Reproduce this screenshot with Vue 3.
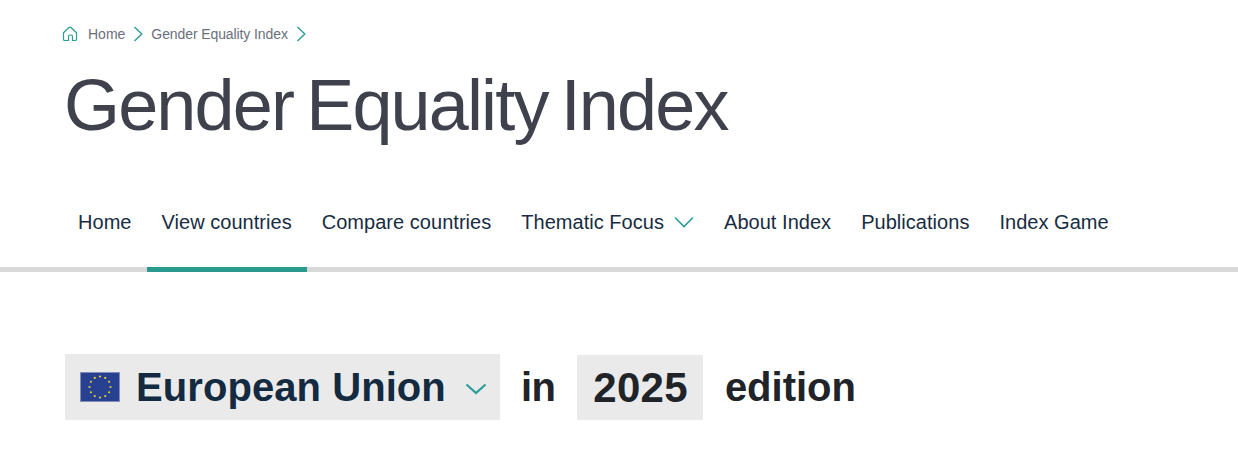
<script setup>
const tabs = [
  { label: 'Home' },
  { label: 'View countries', active: true },
  { label: 'Compare countries' },
  { label: 'Thematic Focus', caret: true },
  { label: 'About Index' },
  { label: 'Publications' },
  { label: 'Index Game' }
]
const stars = Array.from({ length: 12 }, (_, i) => {
  const a = (i * Math.PI) / 6
  return { x: 20 + 10.500 * Math.sin(a), y: 15 - 10.500 * Math.cos(a) }
})
</script>

<template>
  <div class="page">
    <nav class="crumbs">
      <svg class="home" width="16" height="16" viewBox="0 0 16 16" fill="none">
        <path d="M1.500 6.800 7 1.500q1-.8 2 0l5.500 5.300v6.400q0 1.300-1.300 1.300h-2.700V10.500q0-1.500-1.500-1.500h-1q-1.500 0-1.500 1.500v4H2.800q-1.300 0-1.300-1.300z" stroke="#2b9c96" stroke-width="1.200" stroke-linejoin="round" />
      </svg>
      <span class="crumb first">Home</span>
      <svg class="chev" width="10" height="16" viewBox="0 0 10 16" fill="none"><path d="M1.500 1 8.800 8l-7.300 7" stroke="#2b9c96" stroke-width="1.400" /></svg>
      <span class="crumb second">Gender Equality Index</span>
      <svg class="chev" width="10" height="16" viewBox="0 0 10 16" fill="none"><path d="M1.500 1 8.800 8l-7.300 7" stroke="#2b9c96" stroke-width="1.400" /></svg>
    </nav>

    <h1 class="title">Gender Equality Index</h1>

    <div class="tabs">
      <a v-for="t in tabs" :key="t.label" class="tab" :class="{ active: t.active }">
        {{ t.label }}
        <svg v-if="t.caret" class="caret" width="20" height="12" viewBox="0 0 20 12" fill="none"><path d="M1 1.500 10 10.500l9-9" stroke="#2b9c96" stroke-width="1.600" /></svg>
      </a>
    </div>

    <div class="heading">
      <div class="pick country">
        <svg class="flag" width="40" height="30" viewBox="0 0 40 30">
          <rect x="0.500" y="0.500" width="39" height="29" fill="#27408f" stroke="#7f8fb8" />
          <circle v-for="(s, i) in stars" :key="i" :cx="s.x" :cy="s.y" r="1.100" fill="#dcd03a" />
        </svg>
        <span class="name">European Union</span>
        <svg class="down" width="22" height="12" viewBox="0 0 22 12" fill="none"><path d="M1.500 1.500 11 10l9.500-8.500" stroke="#2b9c96" stroke-width="2.200" /></svg>
      </div>
      <span class="word in">in</span>
      <div class="pick year">2025</div>
      <span class="word edition">edition</span>
    </div>
  </div>
</template>

<style>
html, body { background: #fff; }
</style>

<style scoped>
.page {
  width: 1238px;
  height: 460px;
  overflow: hidden;
  font-family: "Liberation Sans", Arial, sans-serif;
  display: flex;
  flex-direction: column;
}
.crumbs {
  display: flex;
  align-items: center;
  height: 20px;
  margin: 24px 0 0 62px;
  font-size: 14px;
  color: #6b6f7b;
}
.home { margin-right: 10px; }
.crumb { white-space: nowrap; }
.second { letter-spacing: -0.1px; }
.chev { margin: 0 8px; }
.title {
  margin: 21px 0 0 64px;
  font-weight: 400;
  font-size: 72px;
  line-height: 80px;
  color: #3f424c;
  letter-spacing: -1.85px;
  word-spacing: -5px;
  white-space: nowrap;
}
.tabs {
  display: flex;
  margin-top: 51px;
  padding-left: 63px;
  height: 71px;
  border-bottom: 5px solid #d9d9d9;
}
.tab {
  display: flex;
  align-items: flex-start;
  gap: 10px;
  height: 76px;
  padding: 14px 15px 0;
  box-sizing: border-box;
  font-size: 20px;
  line-height: 24px;
  letter-spacing: 0.035px;
  color: #182c42;
  white-space: nowrap;
  border-bottom: 5px solid transparent;
}
.tab.active { border-bottom-color: #2a9a8e; }
.caret { margin-top: 6px; }
.heading {
  display: flex;
  align-items: center;
  margin: 82px 0 0 65px;
  font-size: 40px;
  font-weight: 700;
  color: #202328;
}
.pick { background: #eaeaea; display: flex; align-items: center; }
.country { height: 66px; padding: 0 13px 0 15px; color: #132a40; }
.flag { margin-right: 16px; }
.name { white-space: nowrap; letter-spacing: 0.07px; }
.down { margin-left: 19px; margin-top: 3px; }
.year { height: 65px; margin-top: 1px; padding: 0 15px 0 16px; font-size: 42px; letter-spacing: 0.3px; }
.word { white-space: nowrap; }
.in { margin: 0 22px 0 21px; letter-spacing: -0.6px; }
.edition { margin-left: 22px; }
</style>
